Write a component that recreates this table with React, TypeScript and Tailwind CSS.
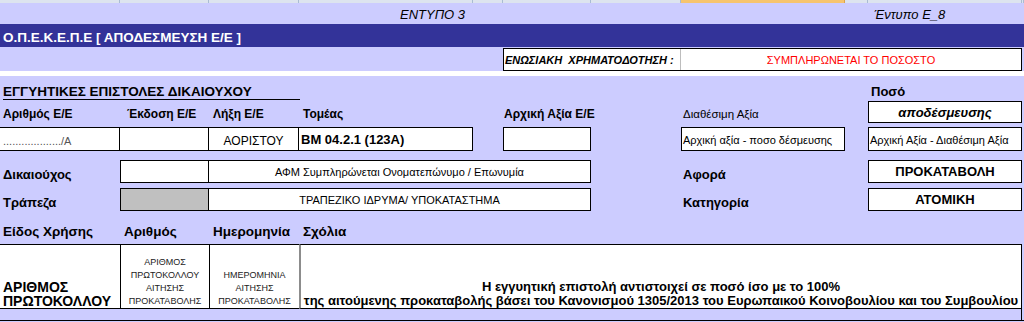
// Form sheet E_8: release of letters of guarantee
const grid = 'grid grid-cols-[120px_89px_90px_174px_30px_88px_90px_164px_23px_154px_2px]'

const headerCols = [120, 89, 90, 174, 30, 88, 90, 164, 23, 154, 2]

function ColumnStrip() {
  return (
    <div className={`${grid} h-[3px]`}>
      {headerCols.map((w, i) => (
        <div
          key={w + '-' + i}
          className={
            i === 7
              ? 'bg-[#f6c46e] border-r border-[#dca24a]'
              : 'bg-[#dde4ef] border-r border-[#a9bcd3]'
          }
        />
      ))}
    </div>
  )
}

export default function App() {
  return (
    <div className="w-[1024px] h-[322px] overflow-hidden bg-[#ccccff] text-black font-['Liberation_Sans',Arial,sans-serif]">
      <ColumnStrip />

      {/* form titles */}
      <div className={`${grid} h-[21px] items-end italic text-[13px] leading-[15px]`}>
        <div className="col-start-4 col-span-3 pl-[101px] pb-[2px] whitespace-nowrap">ΕΝΤΥΠΟ 3</div>
        <div className="col-start-10 pl-[6px] pb-[2px] whitespace-nowrap">Έντυπο Ε_8</div>
      </div>

      <div className="h-[23px] bg-[#333399] flex items-end pl-[3px] pb-[1px] text-white font-bold text-[13.5px] leading-[16px]">
        Ο.Π.Ε.Κ.Ε.Π.Ε [ ΑΠΟΔΕΣΜΕΥΣΗ Ε/Ε ]
      </div>

      {/* union funding */}
      <div className={`${grid} h-[24px] pt-[1px]`}>
        <div className="col-start-6 col-span-5 flex border border-black bg-white">
          <div className="w-[177px] flex items-end pl-[1px] pb-[2px] border-r border-[#bdbdbd] font-bold italic text-[11px] leading-[15px] whitespace-pre">
            ΕΝΩΣΙΑΚΗ  ΧΡΗΜΑΤΟΔΟΤΗΣΗ :
          </div>
          <div className="flex-1 flex items-end justify-center pb-[2px] text-[#ff0000] text-[11px] leading-[15px]">
            ΣΥΜΠΛΗΡΩΝΕΤΑΙ ΤΟ ΠΟΣΟΣΤΟ
          </div>
        </div>
      </div>

      <div className="h-[5px] bg-white" />

      <div className={`${grid} h-[24px] items-end`}>
        <div className="col-span-3 ml-[3px] mr-[-1px] border-b border-black font-bold text-[13.5px] leading-[14px] whitespace-nowrap">
          ΕΓΓΥΗΤΙΚΕΣ ΕΠΙΣΤΟΛΕΣ ΔΙΚΑΙΟΥΧΟΥ
        </div>
        <div className="col-start-10 pl-[3px] pb-[1px] font-bold text-[13px] leading-[15px]">Ποσό</div>
      </div>

      {/* letter details */}
      <div className={`${grid} h-[23px] items-end font-bold text-[12px] leading-[15px]`}>
        <div className="pl-[3px] pb-[1px] whitespace-nowrap">Αριθμός Ε/Ε</div>
        <div className="pl-[7px] pb-[1px] whitespace-nowrap">Έκδοση Ε/Ε</div>
        <div className="pl-[4px] pb-[1px] whitespace-nowrap">Λήξη Ε/Ε</div>
        <div className="pl-[4px] pb-[1px] whitespace-nowrap">Τομέας</div>
        <div className="col-start-6 col-span-2 pl-[1px] pb-[1px] whitespace-nowrap">Αρχική Αξία Ε/Ε</div>
        <div className="col-start-8 pl-[2px] pb-[1px] font-normal text-[11.5px] whitespace-nowrap">Διαθέσιμη Αξία</div>
        <div className="col-start-10 h-[22px] flex items-center justify-center border border-black bg-white italic text-[13px]">
          αποδέσμευσης
        </div>
      </div>

      <div className="h-[4px]" />

      <div className={`${grid} h-[24px] text-[11px] leading-[14px]`}>
        <div className="flex items-end pl-[3px] pb-[2px] bg-white border-y border-r border-black text-[#555]">
          .................../Α
        </div>
        <div className="bg-white border-y border-r border-black" />
        <div className="flex items-end justify-center pb-[2px] bg-white border-y border-r border-black text-[12px]">ΑΟΡΙΣΤΟΥ</div>
        <div className="flex items-end pl-[2px] pb-[3px] bg-white border-y border-r border-black font-bold text-[13px] leading-[15px]">
          BM 04.2.1 (123A)
        </div>
        <div className="col-start-6 bg-white border border-black" />
        <div className="col-start-8 flex items-end pl-[1px] pb-[3px] bg-white border border-black whitespace-nowrap">
          Αρχική αξία - ποσο δέσμευσης
        </div>
        <div className="col-start-10 flex items-end pl-[1px] pb-[3px] bg-white border border-black whitespace-nowrap">
          Αρχική Αξία - Διαθέσιμη Αξία
        </div>
      </div>

      <div className="h-[9px]" />

      <div className={`${grid} h-[23px] text-[11px] leading-[14px]`}>
        <div className="flex items-end pl-[3px] pb-[1px] font-bold text-[13px] leading-[15px]">Δικαιούχος</div>
        <div className="bg-white border border-black" />
        <div className="col-start-3 col-span-4 flex items-end justify-center pb-[3px] bg-white border-y border-r border-black">
          ΑΦΜ Συμπληρώνεται Ονοματεπώνυμο / Επωνυμία
        </div>
        <div className="col-start-8 flex items-end pl-[2px] pb-[1px] font-bold text-[13px] leading-[15px]">Αφορά</div>
        <div className="col-start-10 flex items-center justify-center bg-white border border-black font-bold text-[13px]">
          ΠΡΟΚΑΤΑΒΟΛΗ
        </div>
      </div>

      <div className="h-[5px]" />

      <div className={`${grid} h-[23px] text-[11px] leading-[14px]`}>
        <div className="flex items-end pl-[3px] pb-[1px] font-bold text-[13px] leading-[15px]">Τράπεζα</div>
        <div className="bg-[#c0c0c0] border border-black" />
        <div className="col-start-3 col-span-4 flex items-end justify-center pb-[3px] bg-white border-y border-r border-black">
          ΤΡΑΠΕΖΙΚΟ ΙΔΡΥΜΑ/ ΥΠΟΚΑΤΑΣΤΗΜΑ
        </div>
        <div className="col-start-8 flex items-end pl-[2px] pb-[1px] font-bold text-[13px] leading-[15px]">Κατηγορία</div>
        <div className="col-start-10 flex items-center justify-center bg-white border border-black font-bold text-[13px]">
          ΑΤΟΜΙΚΗ
        </div>
      </div>

      {/* usage */}
      <div className={`${grid} h-[33px] items-end font-bold text-[13.5px] leading-[15px]`}>
        <div className="pl-[3px] pb-[5px] whitespace-nowrap">Είδος Χρήσης</div>
        <div className="pl-[4px] pb-[5px]">Αριθμός</div>
        <div className="pl-[4px] pb-[5px]">Ημερομηνία</div>
        <div className="pl-[4px] pb-[5px]">Σχόλια</div>
      </div>

      <div className={`${grid} h-[65px]`}>
        <div className="flex flex-col justify-end pl-[3px] bg-white border-y border-black font-bold text-[14px] leading-[14px]">
          <span>ΑΡΙΘΜΟΣ</span>
          <span>ΠΡΩΤΟΚΟΛΛΟΥ</span>
        </div>
        <div className="flex flex-col justify-end items-center bg-white border-y border-l border-black text-[9px] leading-[13px] text-[#222]">
          <span>ΑΡΙΘΜΟΣ</span>
          <span>ΠΡΩΤΟΚΟΛΛΟΥ</span>
          <span>ΑΙΤΗΣΗΣ</span>
          <span>ΠΡΟΚΑΤΑΒΟΛΗΣ</span>
        </div>
        <div className="flex flex-col justify-end items-center bg-white border-y border-l border-black text-[9px] leading-[13px] text-[#222]">
          <span>ΗΜΕΡΟΜΗΝΙΑ</span>
          <span>ΑΙΤΗΣΗΣ</span>
          <span>ΠΡΟΚΑΤΑΒΟΛΗΣ</span>
        </div>
        <div className="col-start-4 col-span-7 flex flex-col justify-end items-center bg-white border-y border-black border-l-2 border-l-[#8c8c8c] border-r font-bold text-[13px] leading-[14px] whitespace-nowrap">
          <span>Η εγγυητική επιστολή αντιστοιχεί σε ποσό ίσο με το 100%</span>
          <span>της αιτούμενης προκαταβολής βάσει του Κανονισμού 1305/2013 του Ευρωπαικού Κοινοβουλίου και του Συμβουλίου</span>
        </div>
      </div>

      <div className={`${grid} h-[12px]`}>
        <div className="col-span-10 border-r border-b border-black" />
        <div className="border-b border-black" />
      </div>
    </div>
  )
}
